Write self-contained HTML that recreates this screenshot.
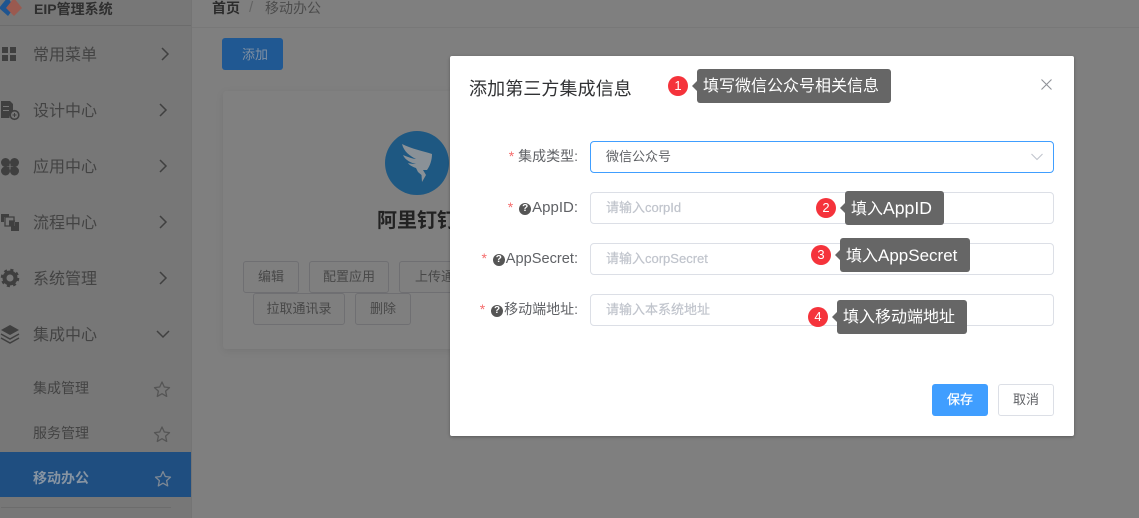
<!DOCTYPE html>
<html lang="zh"><head><meta charset="utf-8"><title>EIP</title>
<style>
*{box-sizing:border-box}
html,body{margin:0;padding:0;width:1139px;height:518px;overflow:hidden;background:#7f7f7f;font-family:"Liberation Sans","Noto Sans CJK SC",sans-serif}
.a{position:absolute;white-space:nowrap}
#side{left:0;top:0;width:191px;height:518px;background:#777}
.m{left:33px;font-size:16px;line-height:20px;color:#434343}
.s{left:33px;font-size:14px;line-height:20px;color:#434343}
.b{height:32px;border:1px solid #6f6f72;border-radius:3px;font-size:13px;color:#484848;line-height:30px;text-align:center;background:#7f7f7f}
.lab{font-size:14px;line-height:20px;color:#606266;right:561px}
.lab i{font-style:normal;font-size:15px}
.inp{left:590px;width:464px;height:32px;border:1px solid #dcdfe6;border-radius:4px;background:#fff;font-size:13px;line-height:30px;padding-left:15px;color:#c0c4cc;font-weight:400;-webkit-text-stroke:.2px #c0c4cc}
.tip{background:#666;color:#fff;border-radius:3px;height:34px;font-size:16px;line-height:35px;padding-left:6px}
.tip i{font-style:normal;font-size:17px}
.tip:before{content:"";position:absolute;left:-5px;top:12px;border-style:solid;border-width:5px 5px 5px 0;border-color:transparent #666 transparent transparent}
.n{width:20px;height:20px;border-radius:50%;background:#f5333b;color:#fff;font-size:13px;line-height:20px;text-align:center}
.star{color:#f56c6c}
.q{display:inline-block;width:12px;height:12px;border-radius:50%;background:#555;color:#fff;font-size:10px;line-height:12px;text-align:center;font-weight:700;vertical-align:1px;margin:0 1px 0 2px}
</style></head><body>
<div class="a" id="side"></div>
<div class="a" style="left:0;top:25px;width:191px;height:1px;background:#6c6c6c"></div>
<div class="a" style="left:191px;top:27px;width:948px;height:1px;background:#787878"></div>
<div class="a" style="left:191px;top:0;width:1px;height:518px;background:#747474"></div>

<svg class="a" style="left:0;top:0" width="190" height="518" viewBox="0 0 190 518">
<path d="M8 -3L-1 8L8 16L14 8Z" fill="#1f5590"/>
<path d="M14 -2L22 8L14 16L6 8Z" fill="#9a5a50"/>
<g fill="#3f3f3f">
<rect x="2" y="47" width="6" height="6"/><rect x="10" y="47" width="6" height="6"/><rect x="2" y="55" width="6" height="6"/><rect x="10" y="55" width="6" height="6"/>
<path d="M1 101h9l3 3v7a6 6 0 0 0-3.500 7H1z"/>
<circle cx="14.500" cy="115" r="4.300" fill="none" stroke="#3f3f3f" stroke-width="1.600"/><path d="M12.500 114.500h4v1h-4zM14 113h1v4h-1z"/>
<circle cx="5.500" cy="162.500" r="4.500"/><circle cx="14.500" cy="162.500" r="4.500"/><circle cx="5.500" cy="171" r="4.500"/><circle cx="14.500" cy="171" r="4.500"/>
<rect x="5.500" y="162.500" width="4" height="4"/><rect x="10.500" y="162.500" width="4" height="4"/><rect x="5.500" y="167" width="4" height="4"/><rect x="10.500" y="167" width="4" height="4"/>
<path d="M1 214h8v3H4v5H1zM11 226h4v-4h4v9h-8z"/>
</g>
<path d="M3 106.500h6M3 110.500h6" stroke="#777" stroke-width="1" fill="none"/>
<path d="M5 217h9v9H5zM9 221h6" fill="none" stroke="#3f3f3f" stroke-width="1.300"/>
<rect x="9" y="221" width="5" height="5" fill="#3f3f3f"/>
<circle cx="10" cy="278" r="5.500" fill="none" stroke="#3f3f3f" stroke-width="4"/>
<circle cx="10" cy="278" r="8" fill="none" stroke="#3f3f3f" stroke-width="2.500" stroke-dasharray="3 3.300"/>
<path d="M10 325L19 330L10 335L1 330Z" fill="#3f3f3f"/>
<path d="M1 334L10 339L19 334M1 338L10 343L19 338" fill="none" stroke="#3f3f3f" stroke-width="1.500"/>
<g fill="none" stroke="#404040" stroke-width="1.500">
<path d="M162 48L168 54L162 60"/><path d="M160 104L166 110L160 116"/><path d="M160 160L166 166L160 172"/><path d="M160 216L166 222L160 228"/><path d="M160 272L166 278L160 284"/>
<path d="M157 331L163 337L169 331"/>
</g>
<g fill="none" stroke="#555" stroke-width="1.300" stroke-linejoin="round">
<path id="st" d="M162 382L164.300 387L169.500 387.600L165.600 391.100L166.700 396.400L162 393.700L157.300 396.400L158.400 391.100L154.500 387.600L159.700 387Z"/>
<path d="M162 427L164.300 432L169.500 432.600L165.600 436.100L166.700 441.400L162 438.700L157.300 441.400L158.400 436.100L154.500 432.600L159.700 432Z"/>
</g>
</svg>
<div class="a" style="left:34px;top:0;font-size:14px;line-height:18px;font-weight:700;color:#2f2f2f">EIP管理系统</div>
<div class="a m" style="top:46px">常用菜单</div>
<div class="a m" style="top:102px">设计中心</div>
<div class="a m" style="top:158px">应用中心</div>
<div class="a m" style="top:214px">流程中心</div>
<div class="a m" style="top:270px">系统管理</div>
<div class="a m" style="top:326px">集成中心</div>
<div class="a s" style="top:378px">集成管理</div>
<div class="a s" style="top:423px">服务管理</div>
<div class="a" style="left:0;top:452px;width:191px;height:45px;background:#1f4e80"></div>
<div class="a s" style="top:468px;font-weight:700;color:#8794a2">移动办公</div>
<svg class="a" style="left:153px;top:470px" width="20" height="20" viewBox="0 0 20 20"><path d="M10 1.500L12.300 6.500L17.500 7.100L13.600 10.600L14.700 15.900L10 13.200L5.300 15.900L6.400 10.600L2.500 7.100L7.700 6.500Z" fill="none" stroke="#7d8894" stroke-width="1.300" stroke-linejoin="round"/></svg>
<div class="a" style="left:1px;top:507px;width:170px;height:1px;background:#6c6c6c"></div>

<div class="a" style="left:212px;top:-2px;font-size:14px;line-height:20px;font-weight:700;color:#2c2c2c">首页</div>
<div class="a" style="left:249px;top:-2px;font-size:15px;line-height:20px;color:#646464">/</div>
<div class="a" style="left:265px;top:-2px;font-size:14px;line-height:20px;color:#4c4c4c">移动办公</div>
<div class="a" style="left:222px;top:38px;width:61px;height:32px;background:#205892;border-radius:3px;color:#8090a2;font-size:13px;line-height:33px;padding-left:5px;text-align:center">添加</div>

<div class="a" style="left:223px;top:91px;width:240px;height:258px;background:#808080;border-radius:3px;box-shadow:0 2px 8px rgba(0,0,0,.08)"></div>
<svg class="a" style="left:385px;top:131px" width="64" height="64" viewBox="0 0 64 64">
<circle cx="32" cy="32" r="32" fill="#1e5882"/>
<path d="M17 13C27 18 38 20 47 23C47 29 45 35 42 39L38 39L41 44L37 51L36.500 44L33 41L31 37C28 36 24 34 23 32C27 33 30 33 31 33C26 32 20 29 18 24C23 26 28 28 31 28C25 25 19 21 17 13Z" fill="#8a9197"/>
</svg>
<div class="a" style="left:377px;top:207px;width:73px;overflow:hidden;font-size:20px;line-height:28px;font-weight:700;color:#222">阿里钉钉</div>
<div class="a b" style="left:243px;top:261px;width:56px">编辑</div>
<div class="a b" style="left:309px;top:261px;width:80px">配置应用</div>
<div class="a b" style="left:399px;top:261px;width:70px;text-align:left;padding-left:15px;overflow:hidden">上传通讯录</div>
<div class="a b" style="left:253px;top:293px;width:92px">拉取通讯录</div>
<div class="a b" style="left:355px;top:293px;width:56px">删除</div>

<div class="a" style="left:450px;top:56px;width:624px;height:380px;background:#fff;border-radius:2px;box-shadow:0 1px 3px rgba(0,0,0,.3)"></div>
<div class="a" style="left:469px;top:77px;font-size:18px;line-height:24px;color:#303133;letter-spacing:.1px">添加第三方集成信息</div>
<svg class="a" style="left:1040px;top:78px" width="13" height="13" viewBox="0 0 13 13"><path d="M1.500 1.500L11.500 11.500M11.500 1.500L1.500 11.500" stroke="#909399" stroke-width="1.100" fill="none"/></svg>

<div class="a lab" style="top:146px"><span class="star">*</span> 集成类型:</div>
<div class="a lab" style="top:197px"><span class="star">*</span> <span class="q">?</span><i>AppID:</i></div>
<div class="a lab" style="top:248px"><span class="star">*</span> <span class="q">?</span><i style="font-size:14.600px">AppSecret:</i></div>
<div class="a lab" style="top:299px"><span class="star">*</span> <span class="q">?</span>移动端地址:</div>

<div class="a inp" style="top:141px;border-color:#409eff;color:#606266;-webkit-text-stroke:0">微信公众号</div>
<svg class="a" style="left:1030px;top:152px" width="14" height="10" viewBox="0 0 14 10"><path d="M1.500 2L7 7.500L12.500 2" stroke="#c0c4cc" stroke-width="1.100" fill="none"/></svg>
<div class="a inp" style="top:192px">请输入corpId</div>
<div class="a inp" style="top:243px">请输入corpSecret</div>
<div class="a inp" style="top:294px">请输入本系统地址</div>

<div class="a" style="left:932px;top:384px;width:56px;height:32px;background:#409eff;border-radius:3px;color:#fff;font-size:13px;-webkit-text-stroke:.25px #fff;line-height:31px;text-align:center">保存</div>
<div class="a" style="left:998px;top:384px;width:56px;height:32px;background:#fff;border:1px solid #dcdfe6;border-radius:3px;color:#606266;font-size:13px;line-height:30px;text-align:center">取消</div>

<div class="a n" style="left:668px;top:76px">1</div>
<div class="a tip" style="left:697px;top:69px;width:194px">填写微信公众号相关信息</div>
<div class="a n" style="left:816px;top:198px">2</div>
<div class="a tip" style="left:845px;top:191px;width:99px">填入<i style="font-size:17.600px">AppID</i></div>
<div class="a n" style="left:811px;top:245px">3</div>
<div class="a tip" style="left:840px;top:238px;width:130px">填入<i>AppSecret</i></div>
<div class="a n" style="left:808px;top:307px">4</div>
<div class="a tip" style="left:837px;top:300px;width:130px">填入移动端地址</div>
</body></html>
